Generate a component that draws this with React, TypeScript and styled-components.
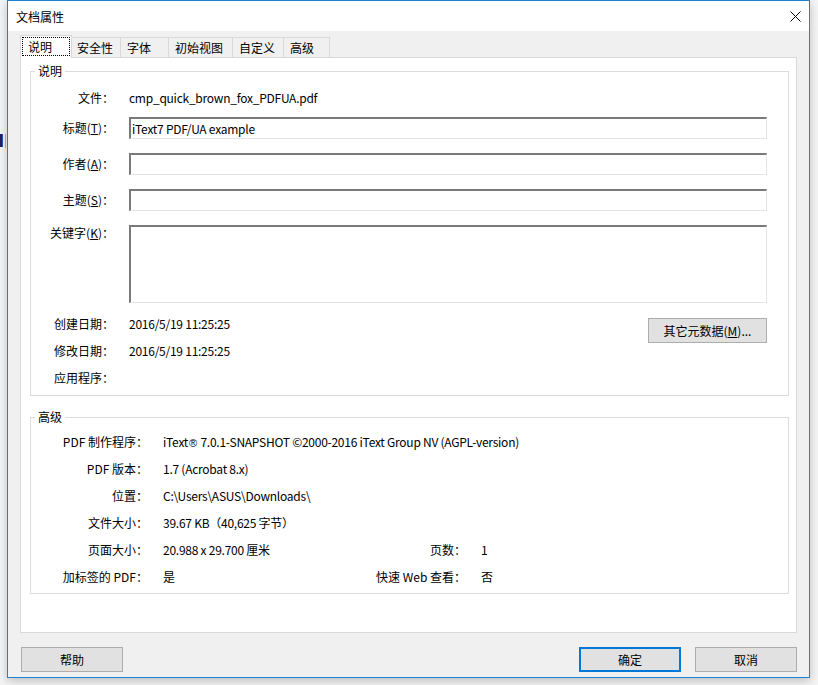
import React from "react";
import styled, { createGlobalStyle } from "styled-components";

const Global = createGlobalStyle`
  html, body { margin: 0; padding: 0; }
  body {
    font-family: "Noto Sans CJK SC", "Noto Sans", sans-serif;
    font-size: 12px;
    color: #000;
    background: #f4f4f4;
  }
  #root { width: 818px; height: 685px; overflow: hidden; }
`;

const Desktop = styled.div`
  display: flex;
  width: 818px;
  height: 685px;
  background: #f4f4f4;
`;

const DesktopEdge = styled.div`
  width: 7px;
  flex: none;
  display: flex;
  align-items: flex-start;
  gap: 2px;
  padding-top: 134px;
  box-sizing: border-box;
`;

const EdgeInk = styled.div`
  width: 3px;
  height: 13px;
  background: linear-gradient(90deg, #241e5a 0 2px, #2a55a8 2px 3px);
`;

const EdgeLine = styled.div`
  width: 1px;
  height: 14px;
  background: #e0b070;
`;

const Window = styled.div`
  box-sizing: border-box;
  width: 803px;
  height: 678px;
  flex: none;
  display: flex;
  flex-direction: column;
  border: 1px solid #1883d7;
  background: #f0f0f0;
  box-shadow: 0 3px 9px rgba(0, 0, 0, 0.22);
`;

const TitleBar = styled.div`
  height: 30px;
  flex: none;
  display: flex;
  align-items: center;
  justify-content: space-between;
  background: #fff;
  padding-left: 8px;
`;

const Title = styled.span`
  font-size: 12px;
  line-height: 16px;
  margin-top: 1px;
`;

const CloseBox = styled.div`
  width: 28px;
  height: 30px;
  display: flex;
  align-items: center;
  justify-content: center;
`;

const Body = styled.div`
  flex: 1;
  display: flex;
  flex-direction: column;
  padding: 4px 12px 5px 12px;
  min-height: 0;
`;

const TabStrip = styled.div`
  display: flex;
  align-items: flex-end;
  height: 23px;
  margin-bottom: -1px;
  position: relative;
  z-index: 1;
`;

const ActiveTab = styled.div`
  box-sizing: border-box;
  width: 52px;
  height: 23px;
  margin-right: -2px;
  position: relative;
  z-index: 2;
  background: #fff;
  border: 1px solid #d9d9d9;
  border-bottom: none;
  padding: 1px 1px 2px 1px;
`;

const FocusRing = styled.div`
  box-sizing: border-box;
  height: 19px;
  border: 1px dotted #000;
  padding-left: 5px;
  line-height: 17px;
  white-space: nowrap;
`;

const Tab = styled.div<{ $w: number; $last?: boolean }>`
  box-sizing: border-box;
  width: ${(p) => p.$w}px;
  height: 20px;
  margin-bottom: 1px;
  background: #f0f0f0;
  border-top: 1px solid #d9d9d9;
  border-left: 1px solid #d9d9d9;
  border-right: ${(p) => (p.$last ? "1px solid #d9d9d9" : "none")};
  padding-left: 6px;
  line-height: 19px;
  white-space: nowrap;
`;

const Panel = styled.div`
  box-sizing: border-box;
  flex: 1;
  display: flex;
  flex-direction: column;
  background: #fff;
  border: 1px solid #d9d9d9;
  padding: 5px 7px 0 9px;
`;

const Group = styled.fieldset<{ $gap?: number }>`
  margin: ${(p) => p.$gap ?? 0}px 0 0 0;
  padding: 0;
  min-inline-size: 0;
  border: 1px solid #dcdcdc;
`;

const Legend = styled.legend`
  margin-left: 4px;
  padding: 0 3px;
  line-height: 16px;
  font-size: 12px;
`;

const DescGrid = styled.div`
  display: grid;
  grid-template-columns: 83px 1fr 119px;
  grid-template-rows: 30px 36px 36px 36px 91px 27px 27px 16px;
  column-gap: 15px;
  padding: 8px 21px 9px 0;
`;

const AdvGrid = styled.div`
  display: grid;
  grid-template-columns: 117px 188px 100px 1fr;
  grid-auto-rows: 16px;
  row-gap: 11px;
  column-gap: 15px;
  padding: 9px 0 8px 0;
`;

const Label = styled.div<{ $lh?: number }>`
  text-align: right;
  white-space: nowrap;
  line-height: ${(p) => p.$lh ?? 16}px;
  align-self: start;
`;

const Value = styled.div<{ $lh?: number; $span?: boolean }>`
  white-space: nowrap;
  letter-spacing: -0.25px;
  line-height: ${(p) => p.$lh ?? 16}px;
  align-self: start;
  grid-column: ${(p) => (p.$span ? "2 / -1" : "auto")};
`;

const Reg = styled.span`
  font-family: "Liberation Sans", sans-serif;
  font-size: 11px;
  margin: 0 1px 0 1px;
`;

const Key = styled.u`
  text-decoration: underline;
  text-underline-offset: 1px;
`;

const TextBox = styled.input`
  grid-column: 2 / -1;
  box-sizing: border-box;
  height: 22px;
  width: 100%;
  margin: 0;
  padding: 0 0 0 1px;
  border-style: solid;
  border-width: 2px 1px 1px 2px;
  border-color: #7a7a7a #e3e3e3 #e3e3e3 #7a7a7a;
  background: #fff;
  font-family: "Noto Sans CJK SC", "Noto Sans", sans-serif;
  font-size: 12px;
  letter-spacing: -0.25px;
  color: #000;
  outline: none;
`;

const TextArea = styled.textarea`
  grid-column: 2 / -1;
  box-sizing: border-box;
  height: 78px;
  width: 100%;
  margin: 0;
  padding: 0 0 0 1px;
  resize: none;
  border-style: solid;
  border-width: 2px 1px 1px 2px;
  border-color: #7a7a7a #e3e3e3 #e3e3e3 #7a7a7a;
  background: #fff;
  font-family: "Noto Sans CJK SC", "Noto Sans", sans-serif;
  font-size: 12px;
  outline: none;
`;

const Button = styled.button<{ $primary?: boolean; $w?: number }>`
  box-sizing: border-box;
  width: ${(p) => p.$w ?? 102}px;
  height: 25px;
  margin: 0;
  padding: 0;
  background: #e1e1e1;
  border: ${(p) => (p.$primary ? "2px solid #0078d7" : "1px solid #adadad")};
  font-family: "Noto Sans CJK SC", "Noto Sans", sans-serif;
  font-size: 12px;
  color: #000;
  line-height: 16px;
  white-space: nowrap;
`;

const MetaButton = styled(Button)`
  grid-column: 3;
  grid-row: 6 / span 2;
  margin-top: 2px;
  justify-self: end;
`;

const Footer = styled.div`
  display: flex;
  align-items: center;
  margin-top: 14px;
  padding-left: 1px;
  gap: 14px;
`;

const Spacer = styled.div`
  flex: 1;
`;

const CloseIcon = () => (
  <svg width="11" height="11" viewBox="0 0 11 11">
    <path d="M0.5 0.5 L10.5 10.5 M10.5 0.5 L0.5 10.5" stroke="#000" strokeWidth="1" fill="none" />
  </svg>
);

const tabs = [
  { label: "安全性", width: 50 },
  { label: "字体", width: 48 },
  { label: "初始视图", width: 64 },
  { label: "自定义", width: 51 },
  { label: "高级", width: 47 },
];

export default function App() {
  return (
    <>
      <Global />
      <Desktop>
        <DesktopEdge>
          <EdgeInk />
          <EdgeLine />
        </DesktopEdge>
        <Window>
          <TitleBar>
            <Title>文档属性</Title>
            <CloseBox>
              <CloseIcon />
            </CloseBox>
          </TitleBar>
          <Body>
            <TabStrip>
              <ActiveTab>
                <FocusRing>说明</FocusRing>
              </ActiveTab>
              {tabs.map((t, i) => (
                <Tab key={t.label} $w={t.width} $last={i === tabs.length - 1}>
                  {t.label}
                </Tab>
              ))}
            </TabStrip>
            <Panel>
              <Group>
                <Legend>说明</Legend>
                <DescGrid>
                  <Label $lh={22}>文件：</Label>
                  <Value $lh={22} $span>cmp_quick_brown_fox_PDFUA.pdf</Value>

                  <Label $lh={22}>
                    标题(<Key>T</Key>)：
                  </Label>
                  <TextBox readOnly defaultValue="iText7 PDF/UA example" />

                  <Label $lh={22}>
                    作者(<Key>A</Key>)：
                  </Label>
                  <TextBox readOnly defaultValue="" />

                  <Label $lh={22}>
                    主题(<Key>S</Key>)：
                  </Label>
                  <TextBox readOnly defaultValue="" />

                  <Label>
                    关键字(<Key>K</Key>)：
                  </Label>
                  <TextArea readOnly defaultValue="" />

                  <Label>创建日期：</Label>
                  <Value>2016/5/19 11:25:25</Value>
                  <MetaButton $w={119}>
                    其它元数据(<Key>M</Key>)...
                  </MetaButton>

                  <Label>修改日期：</Label>
                  <Value>2016/5/19 11:25:25</Value>

                  <Label>应用程序：</Label>
                  <Value></Value>
                </DescGrid>
              </Group>

              <Group $gap={13}>
                <Legend>高级</Legend>
                <AdvGrid>
                  <Label>PDF 制作程序：</Label>
                  <Value $span>
                    iText<Reg>®</Reg> 7.0.1-SNAPSHOT ©2000-2016 iText Group NV (AGPL-version)
                  </Value>

                  <Label>PDF 版本：</Label>
                  <Value $span>1.7 (Acrobat 8.x)</Value>

                  <Label>位置：</Label>
                  <Value $span>C:\Users\ASUS\Downloads\</Value>

                  <Label>文件大小：</Label>
                  <Value $span>39.67 KB（40,625 字节）</Value>

                  <Label>页面大小：</Label>
                  <Value>20.988 x 29.700 厘米</Value>
                  <Label>页数：</Label>
                  <Value>1</Value>

                  <Label>加标签的 PDF：</Label>
                  <Value>是</Value>
                  <Label>快速 Web 查看：</Label>
                  <Value>否</Value>
                </AdvGrid>
              </Group>
            </Panel>
            <Footer>
              <Button>帮助</Button>
              <Spacer />
              <Button $primary>确定</Button>
              <Button>取消</Button>
            </Footer>
          </Body>
        </Window>
      </Desktop>
    </>
  );
}
